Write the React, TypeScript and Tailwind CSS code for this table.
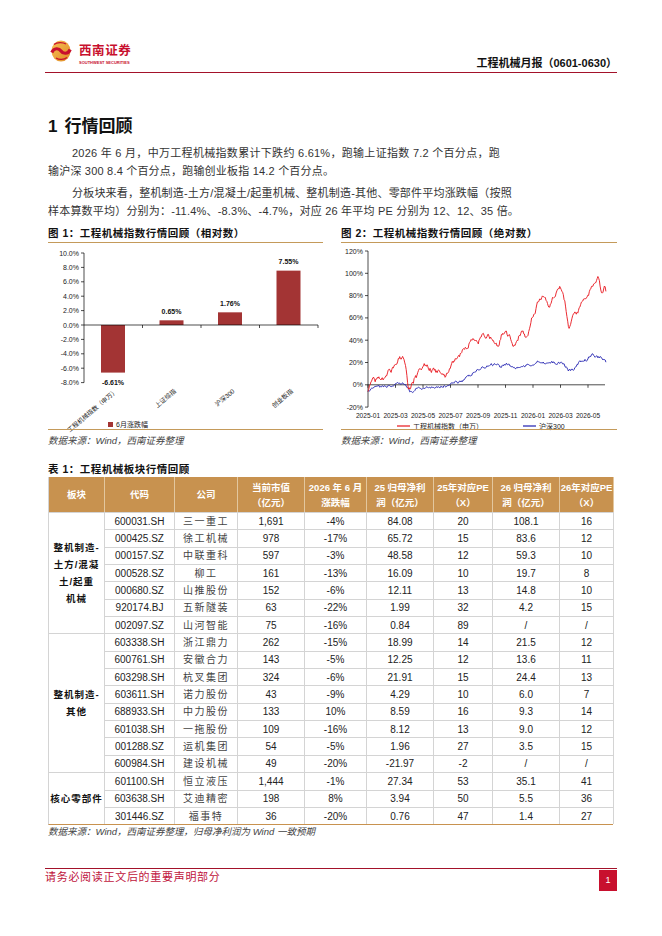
import React from 'react'

const BODY = "font-['Liberation_Sans','Noto_Sans_CJK_SC',sans-serif]"

type Pt = [number, number]

const RED: Pt[] = [
  [0, -6], [0.36, 3.6], [1.1, 6], [1.7, 13.4], [2.0, 21], [2.5, 25], [2.7, 21], [2.93, -3], [3.05, -4.5],
  [3.4, 6], [4.1, 16.4], [4.7, 13.4], [5.5, 10.4], [5.6, 9], [5.9, 15], [6.5, 24], [7.1, 34], [7.5, 40],
  [8.0, 37], [8.4, 45], [9.1, 43], [9.5, 34], [9.7, 45], [10.3, 45], [10.6, 36], [11.2, 48], [11.6, 42],
  [11.9, 58], [12.4, 75], [12.8, 79], [13.1, 70], [13.4, 76], [14.0, 86.6], [14.3, 75], [14.6, 54],
  [14.9, 60], [15.3, 66], [15.6, 75], [16.0, 78], [16.2, 88], [16.7, 98], [17.0, 82], [17.2, 88], [17.3, 85],
]

const BLUE: Pt[] = [
  [0, -6], [0.6, -2.4], [1.3, -1.5], [2.2, 0], [2.6, 0.6], [2.9, -1.5], [3.05, -8], [3.4, -4.5], [4.5, -1.5],
  [5.6, -1.5], [6.3, 1.5], [6.9, 4.5], [7.4, 7.5], [7.8, 12], [8.3, 15], [8.9, 18], [9.4, 19.4], [9.6, 16.4],
  [10.1, 19.4], [10.6, 15], [11.3, 16.4], [12.0, 18.5], [12.4, 21.5], [13.1, 19.4], [14.2, 19.4], [14.6, 13.4],
  [15.0, 13.4], [15.3, 19.4], [15.9, 22.4], [16.3, 27], [16.7, 24.5], [17.0, 25], [17.3, 21],
]

function interp(pts: Pt[], m: number) {
  for (let i = 1; i < pts.length; i++) {
    if (m <= pts[i][0]) {
      const [m0, v0] = pts[i - 1]
      const [m1, v1] = pts[i]
      return v0 + ((v1 - v0) * (m - m0)) / (m1 - m0)
    }
  }
  return pts[pts.length - 1][1]
}

function linePath(pts: Pt[], seed: number, amp: number) {
  let s = seed
  const rand = () => {
    s = (s * 16807) % 2147483647
    return s / 2147483647
  }
  let j = 0
  const n = 330
  const out: string[] = []
  for (let i = 0; i <= n; i++) {
    const m = (i / n) * 17.3
    j = j * 0.6 + (rand() - 0.5) * amp
    const v = interp(pts, m) + (i === 0 ? 0 : j)
    const x = 27 + m * 13.75
    const y = 8 + ((120 - v) / 20) * 22.3
    out.push(`${i === 0 ? 'M' : 'L'}${x.toFixed(1)} ${y.toFixed(1)}`)
  }
  return out.join(' ')
}

const BARS = [
  { name: '工程机械指数（申万）', v: -6.61, label: '-6.61%', ly: 139 },
  { name: '上证综指', v: 0.65, label: '0.65%', ly: 68 },
  { name: '沪深300', v: 1.76, label: '1.76%', ly: 60 },
  { name: '创业板指', v: 7.55, label: '7.55%', ly: 18 },
]

function BarChart() {
  const y = (v: number) => 10 + (10 - v) * 7.2
  const ticks = [10, 8, 6, 4, 2, 0, -2, -4, -6, -8]
  return (
    <svg width="275" height="186" className="block overflow-visible">
      {ticks.map((t) => (
        <g key={t}>
          <line x1="33" x2="36" y1={y(t)} y2={y(t)} stroke="#000" strokeWidth="0.7" />
          <text x="31" y={y(t) + 2.5} fontSize="7" textAnchor="end" fill="#222">
            {t.toFixed(1)}%
          </text>
        </g>
      ))}
      <line x1="36" x2="36" y1={y(10)} y2={y(-8)} stroke="#000" strokeWidth="0.7" />
      {BARS.map((b, i) => {
        const cx = 65 + i * 58.5
        const top = b.v > 0 ? y(b.v) : y(0)
        const h = Math.abs(y(b.v) - y(0))
        return (
          <g key={b.name}>
            <rect x={cx - 12} y={top} width="24" height={h} fill="#a33434" />
            <text x={cx} y={b.ly + 2.5} fontSize="7" fontWeight="bold" textAnchor="middle" fill="#111">
              {b.label}
            </text>
            <text
              x={cx + 5}
              y={149}
              fontSize="6.3"
              textAnchor="end"
              fill="#222"
              transform={`rotate(-40 ${cx + 5} 149)`}
            >
              {b.name}
            </text>
          </g>
        )
      })}
      <line x1="36" x2="270" y1={y(0)} y2={y(0)} stroke="#000" strokeWidth="0.7" />
      {[94.5, 153, 211.5, 270].map((x) => (
        <line key={x} x1={x} x2={x} y1={y(0)} y2={y(0) + 3} stroke="#000" strokeWidth="0.7" />
      ))}
      <rect x="60" y="179" width="5" height="5" fill="#a33434" />
      <text x="68" y="184" fontSize="7" fill="#222">
        6月涨跌幅
      </text>
    </svg>
  )
}

function LineChart() {
  const y = (v: number) => 8 + ((120 - v) / 20) * 22.3
  const ticks = [120, 100, 80, 60, 40, 20, 0, -20]
  const months = ['2025-01', '2025-03', '2025-05', '2025-07', '2025-09', '2025-11', '2026-01', '2026-03', '2026-05']
  return (
    <svg width="276" height="186" className="block overflow-visible">
      {ticks.map((t) => (
        <g key={t}>
          <line x1="24" x2="27" y1={y(t)} y2={y(t)} stroke="#000" strokeWidth="0.7" />
          <text x="22" y={y(t) + 2.5} fontSize="7" textAnchor="end" fill="#222">
            {t}%
          </text>
        </g>
      ))}
      <line x1="27" x2="27" y1={y(120)} y2={y(-20)} stroke="#000" strokeWidth="0.7" />
      <line x1="27" x2="264" y1={y(0)} y2={y(0)} stroke="#000" strokeWidth="0.7" />
      {months.map((m, i) => (
        <g key={m}>
          <line x1={27 + i * 27.5} x2={27 + i * 27.5} y1={y(0)} y2={y(0) + 3} stroke="#000" strokeWidth="0.7" />
          <text x={27 + i * 27.5} y="174.5" fontSize="6.6" textAnchor="middle" fill="#222">
            {m}
          </text>
        </g>
      ))}
      <path d={linePath(BLUE, 4242, 2.2)} fill="none" stroke="#1f1fb0" strokeWidth="0.9" />
      <path d={linePath(RED, 9137, 4.2)} fill="none" stroke="#e8141c" strokeWidth="0.9" />
      <line x1="56" x2="69" y1="183" y2="183" stroke="#e8141c" strokeWidth="1.2" />
      <text x="72" y="185.5" fontSize="7" fill="#222">
        工程机械指数（申万）
      </text>
      <line x1="182" x2="195" y1="183" y2="183" stroke="#1f1fb0" strokeWidth="1.2" />
      <text x="198" y="185.5" fontSize="7" fill="#222">
        沪深300
      </text>
    </svg>
  )
}

type Row = [string, string, string, string, string, string, string, string]

const GROUPS: { label: string[]; rows: Row[] }[] = [
  {
    label: ['整机制造-', '土方/混凝', '土/起重', '机械'],
    rows: [
      ['600031.SH', '三一重工', '1,691', '-4%', '84.08', '20', '108.1', '16'],
      ['000425.SZ', '徐工机械', '978', '-17%', '65.72', '15', '83.6', '12'],
      ['000157.SZ', '中联重科', '597', '-3%', '48.58', '12', '59.3', '10'],
      ['000528.SZ', '柳工', '161', '-13%', '16.09', '10', '19.7', '8'],
      ['000680.SZ', '山推股份', '152', '-6%', '12.11', '13', '14.8', '10'],
      ['920174.BJ', '五新隧装', '63', '-22%', '1.99', '32', '4.2', '15'],
      ['002097.SZ', '山河智能', '75', '-16%', '0.84', '89', '/', '/'],
    ],
  },
  {
    label: ['整机制造-', '其他'],
    rows: [
      ['603338.SH', '浙江鼎力', '262', '-15%', '18.99', '14', '21.5', '12'],
      ['600761.SH', '安徽合力', '143', '-5%', '12.25', '12', '13.6', '11'],
      ['603298.SH', '杭叉集团', '324', '-6%', '21.91', '15', '24.4', '13'],
      ['603611.SH', '诺力股份', '43', '-9%', '4.29', '10', '6.0', '7'],
      ['688933.SH', '中力股份', '133', '10%', '8.59', '16', '9.3', '14'],
      ['601038.SH', '一拖股份', '109', '-16%', '8.12', '13', '9.0', '12'],
      ['001288.SZ', '运机集团', '54', '-5%', '1.96', '27', '3.5', '15'],
      ['600984.SH', '建设机械', '49', '-20%', '-21.97', '-2', '/', '/'],
    ],
  },
  {
    label: ['核心零部件'],
    rows: [
      ['601100.SH', '恒立液压', '1,444', '-1%', '27.34', '53', '35.1', '41'],
      ['603638.SH', '艾迪精密', '198', '8%', '3.94', '50', '5.5', '36'],
      ['301446.SZ', '福事特', '36', '-20%', '0.76', '47', '1.4', '27'],
    ],
  },
]

const HEADERS = [
  ['板块'],
  ['代码'],
  ['公司'],
  ['当前市值', '（亿元）'],
  ['2026 年 6 月', '涨跌幅'],
  ['25 归母净利', '润（亿元）'],
  ['25年对应PE', '（X）'],
  ['26 归母净利', '润（亿元）'],
  ['26年对应PE', '（X）'],
]

const SPAN = { 7: 'row-span-7', 8: 'row-span-8', 3: 'row-span-3' } as Record<number, string>

function SectorTable() {
  return (
    <div className="grid grid-cols-[56px_70px_63px_67px_62px_67px_59px_67px_54px] grid-rows-[35px_repeat(18,17.35px)] border-b-[1.5px] border-l border-[#c8924f] border-l-[#d4d4d4]">
      {HEADERS.map((h, i) => (
        <div
          key={i}
          className="flex flex-col items-center justify-center border-r border-[#e3c79e] bg-[#c8924f] text-[9.5px] leading-[15px] font-bold whitespace-nowrap text-white last:border-r-[#d4d4d4]"
        >
          {h.map((l) => (
            <span key={l}>{l}</span>
          ))}
        </div>
      ))}
      {GROUPS.map((g) => (
        <React.Fragment key={g.label.join('')}>
          <div
            className={`${SPAN[g.rows.length]} flex flex-col items-center justify-center border-t border-r border-[#d4d4d4] text-[9.5px] leading-[17px] font-bold text-[#111]`}
          >
            {g.label.map((l) => (
              <span key={l} className="tracking-[1px]">
                {l}
              </span>
            ))}
          </div>
          {g.rows.map((r) =>
            r.map((c, ci) => (
              <div
                key={r[0] + ci}
                className={`flex items-center justify-center border-t border-r border-[#d4d4d4] text-[10px] text-[#222] ${
                  ci === 1 ? 'tracking-[1.5px] text-[#444]' : ''
                }`}
              >
                {c}
              </div>
            ))
          )}
        </React.Fragment>
      ))}
    </div>
  )
}

function Logo() {
  return (
    <div className="ml-[5px] flex items-start gap-[7px]">
      <svg width="22" height="22" viewBox="0 0 20 22" className="mt-[2px]">
        <defs>
          <linearGradient id="lg" x1="0" y1="0" x2="1" y2="1">
            <stop offset="0" stopColor="#f7c255" />
            <stop offset="1" stopColor="#e08a25" />
          </linearGradient>
        </defs>
        <ellipse cx="10" cy="11" rx="9.5" ry="10.5" fill="url(#lg)" />
        <path d="M0.8 12.5 C3 7.5 8 8 10 11 C12 14 17 14.5 19.2 9.5" fill="none" stroke="#c8102e" strokeWidth="3.2" />
        <path d="M3 4.5 C6 2 12 2 15 4" fill="none" stroke="#c8102e" strokeWidth="1.2" />
        <path d="M5 18 C8 20 13 20 16 17.5" fill="none" stroke="#c8102e" strokeWidth="1.2" />
      </svg>
      <div className="flex flex-col pt-[7px]">
        <span className="text-[12.5px] leading-[13px] font-bold tracking-[0.6px] text-[#c8102e]">西南证券</span>
        <span className="mt-[3px] text-[4px] leading-[4px] font-bold text-[#c8102e]">SOUTHWEST SECURITIES</span>
      </div>
    </div>
  )
}

export default function App() {
  return (
    <div className={`${BODY} flex h-[936px] w-[662px] flex-col bg-white text-[#222]`}>
      <header className="mx-[45px] mt-[38px] flex h-[35px] justify-between border-b border-[#a3122a]">
        <Logo />
        <span className="mb-[3px] self-end text-[11px] leading-[11px] font-bold text-[#111]">
          工程机械月报（0601-0630）
        </span>
      </header>

      <main className="px-[48px]">
        <h1 className="mt-[44px] text-[17px] leading-[20px] font-bold text-[#111]">
          1<span className="ml-[7px]">行情回顾</span>
        </h1>

        <div className="mt-[7px] w-[452px] text-[11px] leading-[18px] tracking-[0.2px] whitespace-nowrap text-[#333]">
          <p className="pl-[24px] text-justify [text-align-last:justify]">
            2026 年 6 月，中万工程机械指数累计下跌约 6.61%，跑输上证指数 7.2 个百分点，跑
          </p>
          <p>输沪深 300 8.4 个百分点，跑输创业板指 14.2 个百分点。</p>
        </div>
        <div className="mt-[4px] w-[452px] text-[11px] leading-[18px] tracking-[0.2px] whitespace-nowrap text-[#333]">
          <p className="pl-[24px] text-justify [text-align-last:justify]">
            分板块来看，整机制造-土方/混凝土/起重机械、整机制造-其他、零部件平均涨跌幅（按照
          </p>
          <p>样本算数平均）分别为：-11.4%、-8.3%、-4.7%，对应 26 年平均 PE 分别为 12、12、35 倍。</p>
        </div>

        <div className="mt-[6px] grid grid-cols-[275px_276px] gap-x-[18px]">
          {[
            { title: '图 1：工程机械指数行情回顾（相对数）', chart: <BarChart /> },
            { title: '图 2：工程机械指数行情回顾（绝对数）', chart: <LineChart /> },
          ].map((f) => (
            <div key={f.title} className="flex flex-col">
              <div className="h-[17px] border-b border-[#c49a5a] text-[10.5px] leading-[14px] font-bold tracking-[0.5px] text-[#111]">
                {f.title}
              </div>
              {f.chart}
              <div className="border-t border-[#c49a5a]" />
              <p className="mt-[5px] text-[9.5px] leading-[12px] text-[#444] italic">数据来源：Wind，西南证券整理</p>
            </div>
          ))}
        </div>

        <p className="mt-[15px] text-[10.5px] leading-[14px] font-bold tracking-[0.5px] text-[#111]">
          表 1：工程机械板块行情回顾
        </p>
        <div className="mt-[1px] w-[565px]">
          <SectorTable />
        </div>
        <p className="mt-[1px] text-[9.5px] leading-[12px] text-[#444] italic">
          数据来源：Wind，西南证券整理，归母净利润为 Wind 一致预期
        </p>
      </main>

      <footer className="mx-[45px] mt-[30px] flex items-start justify-between border-t border-[#a3122a]">
        <span className="mt-[1px] text-[11px] leading-[14px] tracking-[0.7px] text-[#c0143c]">
          请务必阅读正文后的重要声明部分
        </span>
        <span className="mt-[1px] flex h-[21px] w-[18px] items-center justify-center bg-[#c8102e] text-[9px] text-white">
          1
        </span>
      </footer>
    </div>
  )
}
